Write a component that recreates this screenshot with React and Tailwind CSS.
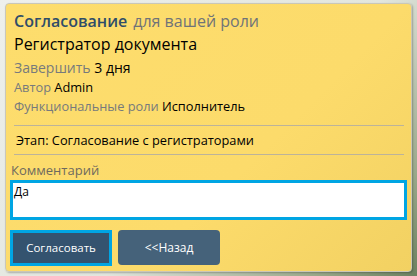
import React from "react";

const font = { fontFamily: '"Open Sans", "Noto Sans", sans-serif' };

export default function App() {
  return (
    <div
      className="w-[417px] h-[276px] overflow-hidden pt-[3px] pl-[5px] bg-[linear-gradient(135deg,#eef0ec_0%,#e2e6de_55%,#9aa98a_85%,#6c8160_100%)]"
      style={font}
    >
      <div className="w-[407px] h-[269px] rounded-[4px] border border-[#c9c7b8] bg-[linear-gradient(135deg,#fddd6d_0%,#fcdb6b_60%,#f2d162_100%)] shadow-[1px_1px_2px_rgba(0,0,0,0.25)] flex flex-col">
        <div className="px-[8px] pt-[6px]">
          <div className="flex items-baseline gap-[6px] text-[16px] leading-[22px]">
            <span className="font-semibold text-[#2f4d69]">Согласование</span>
            <span className="text-[#6f7378]">для вашей роли</span>
          </div>
          <div className="text-[16px] leading-[25px] text-black">Регистратор документа</div>
          <div className="text-[14px] leading-[21px]">
            <span className="text-[#777a7c]">Завершить </span>
            <span className="text-black">3 дня</span>
          </div>
          <div className="text-[12.8px] leading-[19px]">
            <span className="text-[#777a7c]">Автор </span>
            <span className="text-black">Admin</span>
          </div>
          <div className="text-[12.8px] leading-[19px]">
            <span className="text-[#777a7c]">Функциональные роли </span>
            <span className="text-black">Исполнитель</span>
          </div>
          <div className="mt-[9px] border-t border-[#bcb39a] mr-[-1px]" />
          <div className="text-[12.8px] leading-[28px] pl-[2px] text-black">
            Этап: Согласование с регистраторами
          </div>
          <div className="border-t border-[#bcb39a] mr-[-1px]" />
        </div>
        <div className="px-[4px] pt-[7px]">
          <div className="text-[13px] leading-[16px] text-[#6e6a5e] pl-[1px]">Комментарий</div>
          <div className="mt-[2px] h-[40px] border-[3px] border-[#00a5e3] bg-white px-[1px] pt-[1px] text-[12px] leading-[16px] text-black">
            Да
          </div>
          <div className="flex gap-[6px] mt-[10px]">
            <button className="w-[102px] h-[36px] border-[3px] border-[#00a5e3] bg-[#34536f] text-white text-[11.5px]">
              Согласовать
            </button>
            <button className="w-[102px] h-[35px] rounded-[4px] bg-[#45627a] text-white text-[12px]">
              &lt;&lt;Назад
            </button>
          </div>
        </div>
      </div>
    </div>
  );
}
